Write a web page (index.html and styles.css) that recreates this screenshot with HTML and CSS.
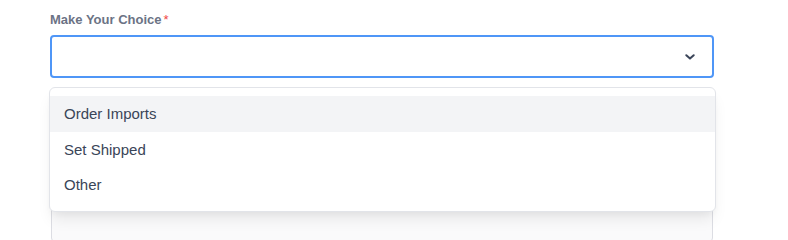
FILE: index.html
```html
<!DOCTYPE html>
<html>
<head>
<meta charset="utf-8">
<link rel="stylesheet" href="styles.css">
</head>
<body>
<div class="field">
  <label class="label">Make Your Choice<span class="req">*</span></label>
  <div class="select-wrap">
    <div class="select">
      <svg class="chev" width="10" height="6" viewBox="0 0 10 6"><path d="M1.3 1.2 L5 4.6 L8.7 1.2" fill="none" stroke="#3b4559" stroke-width="2" stroke-linecap="round" stroke-linejoin="round"/></svg>
    </div>
    <ul class="menu">
      <li class="item active">Order Imports</li>
      <li class="item">Set Shipped</li>
      <li class="item">Other</li>
    </ul>
  </div>
  <div class="textarea"></div>
</div>
</body>
</html>
```
FILE: styles.css
```css
html, body { margin: 0; padding: 0; background: #fff; }
body { font-family: "Liberation Sans", Arial, sans-serif; }
.field { padding: 12px 0 0 50px; width: 664px; }
.label { display: block; font-size: 13px; font-weight: bold; color: #6b7385; line-height: 16px; margin-bottom: 7px; }
.req { color: #ef4444; margin-left: 2px; font-weight: normal; }
.select-wrap { position: relative; }
.select { box-sizing: border-box; height: 43px; border: 2px solid #4f96f7; border-radius: 4px; display: flex; align-items: center; justify-content: flex-end; padding-right: 17px; }
.chev { display: block; margin-top: 1px; }
.menu { position: absolute; top: 52px; left: -1px; width: 667px; box-sizing: border-box; margin: 0; padding: 8px 0; list-style: none; background: #fff; border: 1px solid #e2e4e9; border-radius: 6px; box-shadow: 0 10px 15px -3px rgba(0,0,0,0.08), 0 4px 6px -2px rgba(0,0,0,0.04); z-index: 2; }
.item { height: 35.5px; line-height: 35.5px; padding-left: 14px; font-size: 15px; color: #3a4558; }
.item.active { background: #f3f4f6; }
.textarea { margin: 24px 0 0 1px; width: 662px; box-sizing: border-box; height: 140px; border: 1px solid #dcdde3; border-radius: 4px; background: #fafafb; }
```
